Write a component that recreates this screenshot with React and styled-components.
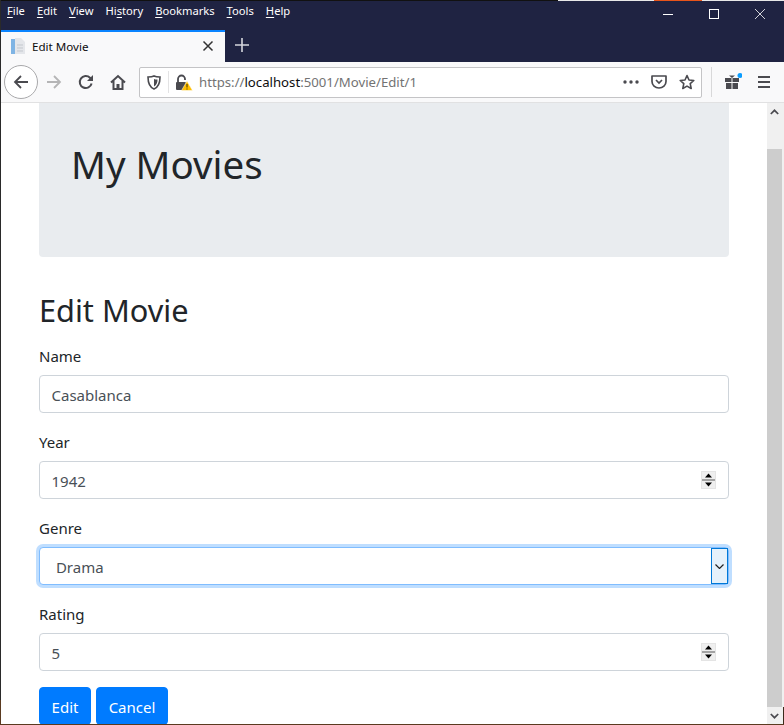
import styled, { createGlobalStyle } from 'styled-components';

const GlobalStyle = createGlobalStyle`
  html, body { margin: 0; padding: 0; background: #fff; overflow: hidden; }
  * { box-sizing: border-box; }
`;

const chrome = '#1f2342';
const uiFont = '"Noto Sans", "Open Sans", sans-serif';
const pageFont = '"Noto Sans", "Open Sans", sans-serif';

const Window = styled.div`
  width: 784px;
  height: 725px;
  display: flex;
  flex-direction: column;
  overflow: hidden;
  border-style: solid;
  border-width: 0 0 1px 1px;
  border-image: linear-gradient(to bottom, #2a2a2a 0 700px, #5a3a20 700px) 1;
  font-family: ${uiFont};
`;

const TopEdge = styled.div`
  height: 1px;
  flex: none;
  background: linear-gradient(
    to right,
    #111 0 557px,
    #e8e8e8 557px 653px,
    #e8541a 653px 701px,
    #e8e8e8 701px
  );
`;

const TitleBar = styled.div`
  height: 29px;
  flex: none;
  background: ${chrome};
  display: flex;
  align-items: center;
  justify-content: space-between;
`;

const Menu = styled.nav`
  display: flex;
  gap: 12px;
  padding-left: 6px;
  margin-top: -10px;
  color: #fff;
  font-size: 11.2px;
`;

const MenuItem = styled.span`
  u { text-underline-offset: 2px; }
`;

const WindowControls = styled.div`
  display: flex;
  margin-top: -3px;
  padding-right: 1px;
`;

const WindowButton = styled.div`
  width: 46px;
  height: 20px;
  display: flex;
  align-items: center;
  justify-content: center;
`;

const TabStrip = styled.div`
  height: 32px;
  flex: none;
  background: ${chrome};
  display: flex;
  align-items: stretch;
`;

const Tab = styled.div`
  width: 224px;
  background: #f9f9fa;
  border-top: 2px solid #0a84ff;
  display: flex;
  align-items: center;
  padding: 0 11px 2px 9px;
  gap: 6px;
  color: #0c0c0d;
  font-size: 11.6px;
`;

const TabTitle = styled.span`
  flex: 1;
`;

const NewTab = styled.div`
  width: 34px;
  padding-bottom: 2px;
  display: flex;
  align-items: center;
  justify-content: center;
`;

const NavBar = styled.div`
  height: 41px;
  flex: none;
  background: #f9f9fa;
  border-bottom: 1px solid #e1e1e2;
  display: flex;
  align-items: center;
  padding-left: 3px;
`;

const BackButton = styled.div`
  width: 34px;
  height: 34px;
  flex: none;
  border: 1px solid #a9a9ab;
  border-radius: 50%;
  background: #fff;
  display: flex;
  align-items: center;
  justify-content: center;
`;

const NavButton = styled.div`
  width: 32px;
  height: 32px;
  flex: none;
  display: flex;
  align-items: center;
  justify-content: center;
`;

const UrlBar = styled.div`
  width: 563px;
  height: 31px;
  margin-left: 5px;
  flex: none;
  background: #fff;
  border: 1px solid #c4c4c6;
  border-radius: 2px;
  display: flex;
  align-items: center;
`;

const UrlSlot = styled.div`
  width: ${({ $w }) => $w}px;
  flex: none;
  display: flex;
  align-items: center;
  justify-content: center;
`;

const UrlDivider = styled.div`
  width: 1px;
  height: 22px;
  flex: none;
  background: #e3e3e4;
`;

const UrlText = styled.div`
  flex: 1;
  font-size: 13.2px;
  color: #737373;
  white-space: nowrap;
  b { font-weight: 400; color: #0c0c0d; }
`;

const ToolbarDivider = styled.div`
  width: 1px;
  height: 30px;
  margin: 0 4px 0 9px;
  flex: none;
  background: #d8d8d9;
`;

const Viewport = styled.div`
  flex: 1;
  min-height: 0;
  display: flex;
`;

const Page = styled.main`
  flex: 1;
  min-width: 0;
  padding: 0 38px;
  background: #fff;
  color: #212529;
  font-family: ${pageFont};
  overflow: hidden;
`;

const Jumbotron = styled.div`
  height: 154px;
  padding: 31px 0 0 32px;
  background: #e9ecef;
  border-radius: 0 0 4px 4px;
  margin-bottom: 31px;
`;

const Title = styled.h1`
  margin: 0;
  font-size: 38.5px;
  font-weight: 400;
  line-height: 60px;
`;

const Heading = styled.h2`
  margin: 0 0 11px;
  font-size: 30.7px;
  font-weight: 400;
  line-height: 44px;
`;

const Field = styled.div`
  margin-bottom: 16px;
`;

const Label = styled.label`
  display: block;
  padding-top: 1px;
  margin-bottom: 7px;
  font-size: 15px;
  line-height: 24px;
`;

const Control = styled.div`
  position: relative;
  height: 38px;
`;

const TextInput = styled.input`
  display: block;
  width: 100%;
  height: 38px;
  padding: 7px 12px 5px 11.500px;
  border: 1px solid #ced4da;
  border-radius: 4px;
  background: #fff;
  color: #495057;
  font: 15px/24px ${pageFont};
  outline: none;
`;

const Select = styled.select`
  display: block;
  width: 100%;
  height: 38px;
  padding: 7px 12px 5px;
  border: 1px solid #80bdff;
  border-radius: 4px;
  background: #fff;
  color: #495057;
  font: 15px/24px ${pageFont};
  box-shadow: 0 0 0 3px rgba(0, 123, 255, 0.25);
  outline: none;
  appearance: none;
`;

const Spinner = styled.svg`
  position: absolute;
  top: 10px;
  right: 13px;
`;

const SelectArrow = styled.div`
  position: absolute;
  top: 1px;
  right: 1px;
  width: 17px;
  height: 36px;
  background: #e5f1fb;
  border: 1px solid #0078d7;
  display: flex;
  align-items: center;
  justify-content: center;
`;

const Actions = styled.div`
  display: flex;
  gap: 5px;
`;

const Button = styled.button`
  height: 38px;
  padding: 1px 0 0;
  flex: none;
  width: ${({ $w }) => $w}px;
  border: 1px solid #007bff;
  border-radius: 4px;
  background: #007bff;
  color: #fff;
  font: 15px/24px ${pageFont};
`;

const Scrollbar = styled.div`
  width: 17px;
  flex: none;
  background: #f0f0f0;
  display: flex;
  flex-direction: column;
`;

const ScrollArrow = styled.div`
  height: 17px;
  flex: none;
  padding-right: 2px;
  display: flex;
  align-items: center;
  justify-content: center;
  border-right: ${({ $edge }) => ($edge ? '1px solid #3b2a1c' : 'none')};
`;

const ScrollGap = styled.div`
  height: 29px;
  flex: none;
`;

const ScrollThumb = styled.div`
  flex: 1;
  width: 15px;
  background: #cdcdcd;
`;

const Icon = styled.svg`
  display: block;
  flex: none;
`;

const grey = '#4a4a4f';

const MENU = [
  ['F', 'ile'],
  ['E', 'dit'],
  ['V', 'iew'],
  ['Hi', 's', 'tory'],
  ['B', 'ookmarks'],
  ['T', 'ools'],
  ['H', 'elp'],
];

const FIELDS_TOP = [
  { label: 'Name', value: 'Casablanca' },
  { label: 'Year', value: '1942', spin: true },
];

const SpinnerIcon = () => (
  <Spinner width="15" height="18" viewBox="0 0 15 18">
    <rect width="15" height="18" fill="#e4e4e4" />
    <rect x="1" y="1" width="13" height="7" fill="#efefef" />
    <rect x="1" y="10" width="13" height="7" fill="#efefef" />
    <rect x="1" y="8" width="13" height="2" fill="#a3a3a3" />
    <path d="M7.500 2.500 11 6.500H4zM4 11.500h7l-3.500 4z" fill="#000" />
  </Spinner>
);

const Favicon = () => (
  <Icon width="16" height="18" viewBox="0 0 16 18">
    <rect x="1" y="2" width="5" height="15" fill="#7fb4e4" />
    <path d="M5 1h6l4 4v12H5z" fill="#e4e6ea" />
    <path d="M7 8h6M7 11h6M7 14h6" stroke="#c3c7cd" />
  </Icon>
);

export default function App() {
  return (
    <>
      <GlobalStyle />
      <Window>
        <TopEdge />
        <TitleBar>
          <Menu>
            {MENU.map(([a, b, c]) => (
              <MenuItem key={a + b}>
                {c ? (
                  <>
                    {a}
                    <u>{b}</u>
                    {c}
                  </>
                ) : (
                  <>
                    <u>{a}</u>
                    {b}
                  </>
                )}
              </MenuItem>
            ))}
          </Menu>
          <WindowControls>
            <WindowButton>
              <Icon width="10" height="10" viewBox="0 0 10 10">
                <path d="M0 5.500h10" stroke="#fff" />
              </Icon>
            </WindowButton>
            <WindowButton>
              <Icon width="10" height="10" viewBox="0 0 10 10">
                <rect x=".5" y=".5" width="9" height="9" fill="none" stroke="#fff" />
              </Icon>
            </WindowButton>
            <WindowButton>
              <Icon width="10" height="10" viewBox="0 0 10 10">
                <path d="M0 0l10 10M10 0L0 10" stroke="#fff" strokeWidth=".8" />
              </Icon>
            </WindowButton>
          </WindowControls>
        </TitleBar>

        <TabStrip>
          <Tab>
            <Favicon />
            <TabTitle>Edit Movie</TabTitle>
            <Icon width="12" height="12" viewBox="0 0 12 12">
              <path d="M1.500 1.500l9 9M10.500 1.500l-9 9" stroke="#333" strokeWidth="1.500" />
            </Icon>
          </Tab>
          <NewTab>
            <Icon width="14" height="14" viewBox="0 0 14 14">
              <path d="M7 0v14M0 7h14" stroke="#d5d6dd" strokeWidth="1.600" />
            </Icon>
          </NewTab>
        </TabStrip>

        <NavBar>
          <BackButton>
            <Icon width="16" height="16" viewBox="0 0 16 16">
              <path d="M15 8H2M8 2L2 8l6 6" fill="none" stroke={grey} strokeWidth="1.800" />
            </Icon>
          </BackButton>
          <NavButton>
            <Icon width="16" height="16" viewBox="0 0 16 16">
              <path d="M1 8h13M8 2l6 6-6 6" fill="none" stroke="#b5b5b6" strokeWidth="1.800" />
            </Icon>
          </NavButton>
          <NavButton>
            <Icon width="16" height="16" viewBox="0 0 16 16">
              <path d="M13.600 9.500A6 6 0 1 1 12 3.800L14 6" fill="none" stroke={grey} strokeWidth="2" />
              <path d="M15 1v6H9z" fill={grey} />
            </Icon>
          </NavButton>
          <NavButton>
            <Icon width="16" height="16" viewBox="0 0 16 16">
              <path d="M1 8.500 8 2l7 6.500M3.500 7v8h9V7" fill="none" stroke={grey} strokeWidth="2" />
              <rect x="6.500" y="10" width="3" height="5" fill={grey} />
            </Icon>
          </NavButton>
          <UrlBar>
            <UrlSlot $w={28}>
              <Icon width="14" height="15" viewBox="0 0 14 15">
                <path
                  d="M7 1c2 1 4 1 6 1 0 6-1 10-6 12C2 12 1 8 1 2c2 0 4 0 6-1z"
                  fill="none"
                  stroke={grey}
                  strokeWidth="1.600"
                />
                <path d="M7 4c1 .5 2 .5 3.500.5 0 3-.8 5.500-3.500 7z" fill={grey} />
              </Icon>
            </UrlSlot>
            <UrlDivider />
            <UrlSlot $w={30}>
              <Icon width="18" height="17" viewBox="0 0 18 17">
                <path d="M3 8V5a3.500 3.500 0 0 1 7 0v1" fill="none" stroke={grey} strokeWidth="1.800" />
                <rect x="1" y="8" width="10" height="8" rx="1" fill={grey} />
                <path d="M12 7l5.500 9.500h-11z" fill="#ffbf00" stroke="#fff" strokeWidth=".5" />
                <path d="M12 10v3.500M12 14.500v1" stroke="#3a2a00" />
              </Icon>
            </UrlSlot>
            <UrlText>
              https://<b>localhost</b>:5001/Movie/Edit/1
            </UrlText>
            <UrlSlot $w={28}>
              <Icon width="16" height="4" viewBox="0 0 16 4">
                <circle cx="2" cy="2" r="1.700" fill={grey} />
                <circle cx="8" cy="2" r="1.700" fill={grey} />
                <circle cx="14" cy="2" r="1.700" fill={grey} />
              </Icon>
            </UrlSlot>
            <UrlSlot $w={28}>
              <Icon width="16" height="14" viewBox="0 0 16 14">
                <path
                  d="M1 1h14v5.500a7 6.500 0 0 1-14 0z"
                  fill="none"
                  stroke={grey}
                  strokeWidth="1.700"
                  strokeLinejoin="round"
                />
                <path d="M5 5l3 3 3-3" fill="none" stroke={grey} strokeWidth="1.700" />
              </Icon>
            </UrlSlot>
            <UrlSlot $w={28}>
              <Icon width="16" height="16" viewBox="0 0 16 16">
                <path
                  d="M8 1.500l2 4.500 4.800.5-3.600 3.200 1 4.800L8 12.100 3.800 14.500l1-4.800L1.200 6.500 6 6z"
                  fill="none"
                  stroke={grey}
                  strokeWidth="1.600"
                  strokeLinejoin="round"
                />
              </Icon>
            </UrlSlot>
          </UrlBar>
          <ToolbarDivider />
          <NavButton>
            <Icon width="20" height="18" viewBox="0 0 20 18">
              <path d="M3 5h6.500v4H3zM10.500 5H17v4h-6.500zM4 10h5.500v6H4zM10.500 10H16v6h-5.500z" fill={grey} />
              <path d="M7 2.500h6L10 5z" fill={grey} />
              <circle cx="18" cy="2.500" r="2.500" fill="#0a9dff" />
            </Icon>
          </NavButton>
          <NavButton>
            <Icon width="14" height="12" viewBox="0 0 14 12">
              <path d="M1 1h12M1 6h12M1 11h12" stroke={grey} strokeWidth="1.800" />
            </Icon>
          </NavButton>
        </NavBar>

        <Viewport>
          <Page>
            <Jumbotron>
              <Title>My Movies</Title>
            </Jumbotron>
            <Heading>Edit Movie</Heading>
            {FIELDS_TOP.map(({ label, value, spin }) => (
              <Field key={label}>
                <Label>{label}</Label>
                <Control>
                  <TextInput readOnly defaultValue={value} />
                  {spin && <SpinnerIcon />}
                </Control>
              </Field>
            ))}
            <Field>
              <Label>Genre</Label>
              <Control>
                <Select defaultValue="Drama">
                  <option>&nbsp;Drama</option>
                </Select>
                <SelectArrow>
                  <Icon width="9" height="5" viewBox="0 0 9 5">
                    <path d="M.5.5l4 4 4-4" fill="none" stroke="#222" strokeWidth="1.200" />
                  </Icon>
                </SelectArrow>
              </Control>
            </Field>
            <Field>
              <Label>Rating</Label>
              <Control>
                <TextInput readOnly defaultValue="5" />
                <SpinnerIcon />
              </Control>
            </Field>
            <Actions>
              <Button $w={52}>Edit</Button>
              <Button $w={72}>Cancel</Button>
            </Actions>
          </Page>
          <Scrollbar>
            <ScrollArrow>
              <Icon width="9" height="6" viewBox="0 0 9 6">
                <path d="M.8 5l3.700-3.700L8.200 5" fill="none" stroke={grey} strokeWidth="1.700" />
              </Icon>
            </ScrollArrow>
            <ScrollGap />
            <ScrollThumb />
            <ScrollArrow $edge>
              <Icon width="9" height="6" viewBox="0 0 9 6">
                <path d="M.8 1l3.700 3.700L8.200 1" fill="none" stroke={grey} strokeWidth="1.700" />
              </Icon>
            </ScrollArrow>
          </Scrollbar>
        </Viewport>
      </Window>
    </>
  );
}
